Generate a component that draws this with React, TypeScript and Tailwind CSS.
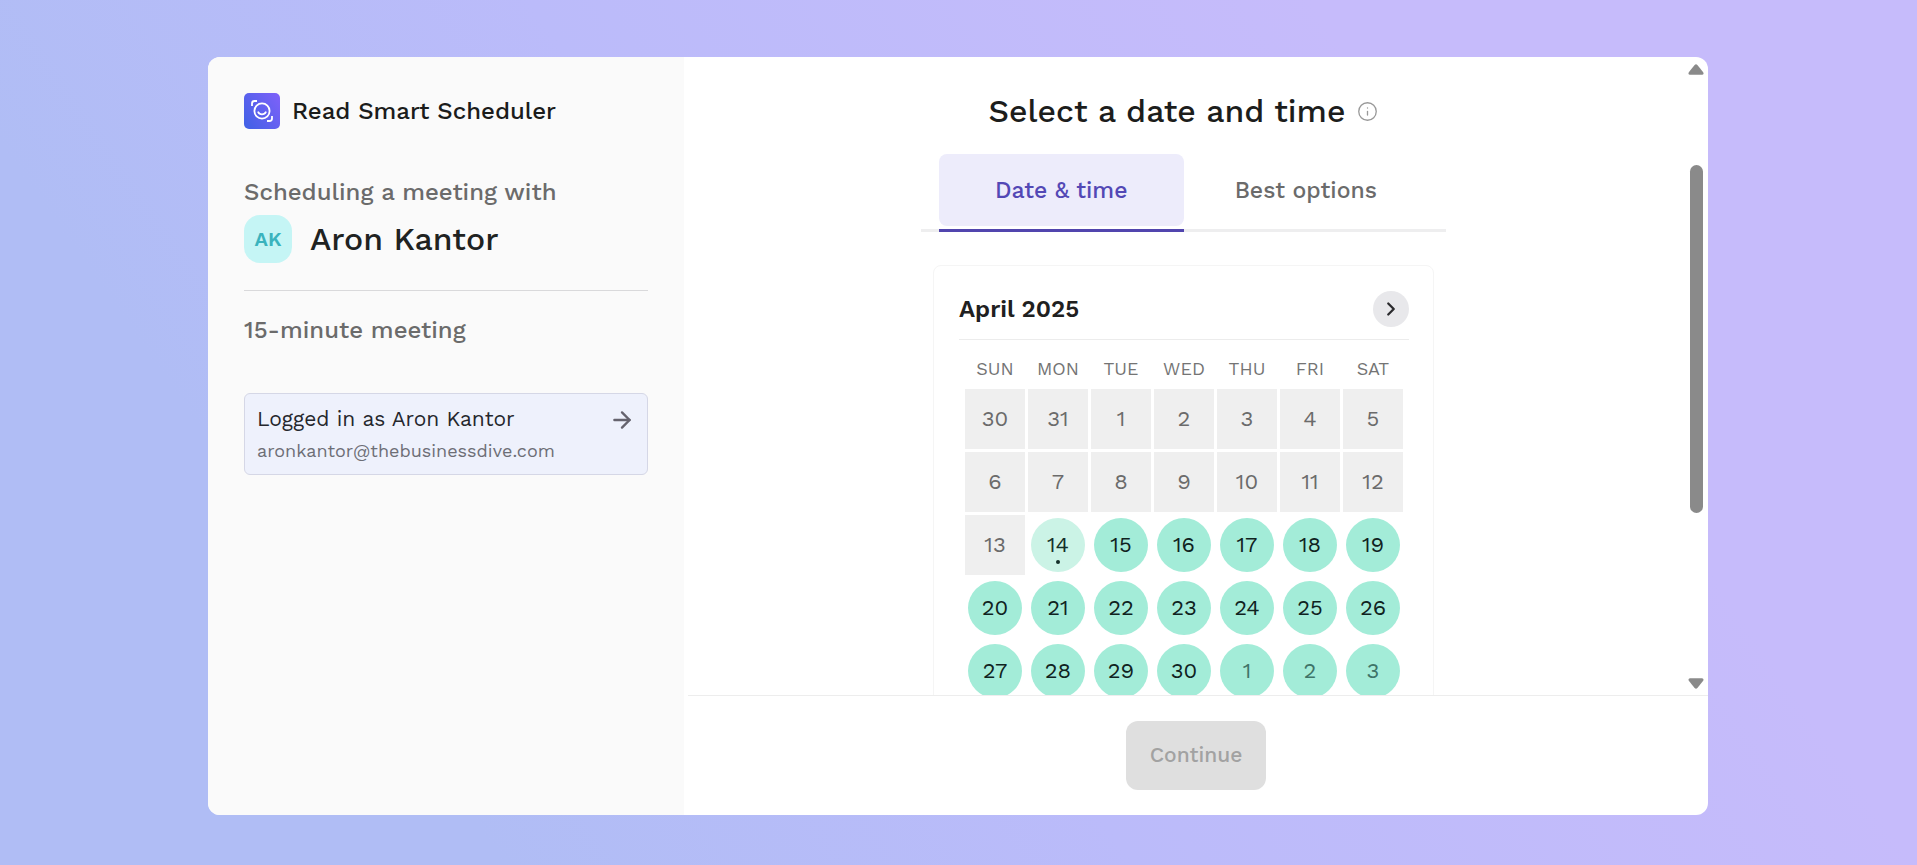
import { useState } from "react";
import type { ReactNode } from "react";
import { ArrowRight, ChevronRight, Info } from "lucide-react";

type Day = {
  label: number;
  status: "past" | "today" | "open" | "next";
};

const weekdays = ["SUN", "MON", "TUE", "WED", "THU", "FRI", "SAT"];

const getStatus = (index: number): Day["status"] => {
  if (index < 15) return "past";
  if (index === 15) return "today";
  return index > 31 ? "next" : "open";
};

// the grid starts on Sunday, March 30
const days: Day[] = Array.from({ length: 35 }, (_, index) => ({
  label: new Date(2025, 2, 30 + index).getDate(),
  status: getStatus(index),
}));

const weeks = [0, 1, 2, 3, 4].map((week) => days.slice(week * 7, week * 7 + 7));

const dayStyles = {
  past: "size-[60px] bg-[#efefef] text-[#6b6b6b]",
  today: "size-[54px] rounded-full bg-[#cbf3e6] text-[#15302a]",
  open: "size-[54px] rounded-full bg-[#a3ecd8] text-[#10231f]",
  next: "size-[54px] rounded-full bg-[#a3ecd8] text-[#3f7468]",
};

const Logo = () => (
  <svg viewBox="0 0 36 36" className="size-9 shrink-0" fill="none">
    <defs>
      <linearGradient id="logo" x1="0" y1="30" x2="36" y2="6" gradientUnits="userSpaceOnUse">
        <stop stopColor="#4361e6" />
        <stop offset="1" stopColor="#7b61f8" />
      </linearGradient>
    </defs>
    <rect width="36" height="36" rx="5" fill="url(#logo)" />
    <g stroke="#fff" strokeWidth="1.8">
      <circle cx="18" cy="18" r="7.6" />
      <path d="M14.200 19.200c1.400 3 6.200 3 7.600 0" strokeLinecap="round" />
      <path d="M8 13v-2.500A2.500 2.500 0 0 1 10.500 8H13M28 23v2.500a2.500 2.500 0 0 1-2.500 2.500H23" />
    </g>
  </svg>
);

const Sidebar = () => (
  <aside className="w-[476px] shrink-0 bg-[#fafafa] p-9">
    <div className="flex items-center gap-3">
      <Logo />
      <p className="text-2xl font-medium text-[#1b1c1b]">Read Smart Scheduler</p>
    </div>

    <p className="mt-[47px] text-2xl font-medium text-[#6b6b6b]">Scheduling a meeting with</p>
    <div className="mt-[7px] flex items-center gap-[18px]">
      <div className="flex size-12 items-center justify-center rounded-2xl bg-[#c5f5f5] text-xl font-semibold text-[#3ab3bd]">
        AK
      </div>
      <h2 className="text-[32px] leading-9 font-medium text-[#202221]">Aron Kantor</h2>
    </div>

    <hr className="mt-[27px] border-[#d9d9db]" />
    <p className="mt-[23px] text-2xl font-medium text-[#6b6b6b]">15-minute meeting</p>

    <button
      type="button"
      className="mt-[47px] flex h-[82px] w-full items-start justify-between rounded-md border border-[#d5d7e6] bg-[#eef1fc] px-3 pt-[9px] text-left"
    >
      <span>
        <span className="block text-[21px] leading-8 text-[#25272d]">Logged in as Aron Kantor</span>
        <span className="block text-lg leading-8 text-[#6d6e76]">aronkantor@thebusinessdive.com</span>
      </span>
      <ArrowRight size={26} strokeWidth={2.2} className="mt-1 text-[#65636e]" />
    </button>
  </aside>
);

const Tab = ({ active, onClick, children }: { active: boolean; onClick: () => void; children: ReactNode }) => (
  <button
    type="button"
    role="tab"
    aria-selected={active}
    onClick={onClick}
    className={`-mb-[3px] w-[245px] border-b-[3px] pb-[3px] text-[23px] font-medium ${
      active ? "border-[#5145ae] text-[#5348b5]" : "border-transparent text-[#6b6b6b]"
    }`}
  >
    <span className={`flex h-[72px] items-center justify-center rounded-lg pt-0.5 ${active ? "bg-[#edecfb]" : ""}`}>
      {children}
    </span>
  </button>
);

const Calendar = () => (
  <section className="mx-auto mt-[33px] w-[501px] rounded-lg border border-[#f5f5f5] pt-[25px] pr-6 pl-[25px]">
    <div className="flex items-center justify-between border-b border-[#ececec] pb-3">
      <h2 className="text-2xl font-semibold text-[#202020]">April 2025</h2>
      <button
        type="button"
        aria-label="Next month"
        className="flex size-9 items-center justify-center rounded-full bg-[#e8e8eb] text-[#2b2b2e]"
      >
        <ChevronRight size={22} strokeWidth={2.5} />
      </button>
    </div>

    <table className="mx-auto mt-[9px] border-separate border-spacing-[3px]">
      <thead>
        <tr>
          {weekdays.map((weekday) => (
            <th key={weekday} scope="col" className="h-[34px] p-0 text-lg font-normal text-[#747474]">
              {weekday}
            </th>
          ))}
        </tr>
      </thead>
      <tbody>
        {weeks.map((week, index) => (
          <tr key={index}>
            {week.map((day) => (
              <td key={day.label} className="size-[60px] p-0">
                <button
                  type="button"
                  disabled={day.status === "past"}
                  className={`relative mx-auto flex items-center justify-center pb-0.5 text-[22px] ${dayStyles[day.status]}`}
                >
                  {day.label}
                  {day.status === "today" && (
                    <span className="absolute bottom-2 size-1 rounded-full bg-[#15302a]" />
                  )}
                </button>
              </td>
            ))}
          </tr>
        ))}
      </tbody>
    </table>
  </section>
);

const Scrollbar = () => (
  <div className="flex w-[25px] shrink-0 flex-col items-center pt-[7px] pr-1 pb-1.5 pl-[5px] text-[#8a8a8a]" aria-hidden="true">
    <svg viewBox="0 0 16 11" className="h-[11px] w-4" fill="currentColor">
      <path d="M6.600 1Q8-.6 9.400 1l5.800 7.300Q16.200 10.600 14 10.800H2Q-.2 10.600.8 8.300z" />
    </svg>
    <div className="flex w-[13px] flex-1 flex-col">
      <div className="flex-[90]" />
      <div className="flex-[349] rounded-full bg-[#8a8a8a]" />
      <div className="flex-[165]" />
    </div>
    <svg viewBox="0 0 16 11" className="h-[11px] w-4 rotate-180" fill="currentColor">
      <path d="M6.600 1Q8-.6 9.400 1l5.800 7.300Q16.200 10.600 14 10.800H2Q-.2 10.600.8 8.300z" />
    </svg>
  </div>
);

const App = () => {
  const [tab, setTab] = useState("date");

  return (
    <div className="flex h-screen justify-center bg-[linear-gradient(55deg,#b0bdf5_20%,#bbbbfa_45%,#c6bbfb_76%)] pt-[57px] pr-px pb-[50px] font-['Work_Sans',Inter,sans-serif]">
      <div className="flex w-full max-w-[1500px] overflow-hidden rounded-xl bg-white">
        <Sidebar />

        <main className="flex min-w-0 flex-1 flex-col">
          <div className="flex min-h-0 flex-1">
            <div className="min-w-0 flex-1 overflow-hidden">
              <div className="mt-9 flex items-center justify-center gap-3">
                <h1 className="text-[32px] leading-9 font-medium text-[#1c1d1c]">Select a date and time</h1>
                <Info size={21} strokeWidth={1.5} className="text-[#999]" />
              </div>
              <div role="tablist" className="mx-auto mt-[25px] flex w-[525px] border-b-[3px] border-[#eeeeef] px-[18px]">
                <Tab active={tab === "date"} onClick={() => setTab("date")}>
                  Date &amp; time
                </Tab>
                <Tab active={tab === "best"} onClick={() => setTab("best")}>
                  Best options
                </Tab>
              </div>
              <Calendar />
            </div>
            <Scrollbar />
          </div>

          <footer className="ml-1 flex h-[120px] items-center justify-center border-t border-[#ededed] pr-1">
            <button
              type="button"
              disabled
              className="h-[69px] rounded-xl bg-[#dfdfdf] px-6 pb-0.5 text-[21px] font-medium text-[#a2a2a2]"
            >
              Continue
            </button>
          </footer>
        </main>
      </div>
    </div>
  );
};

export default App;
